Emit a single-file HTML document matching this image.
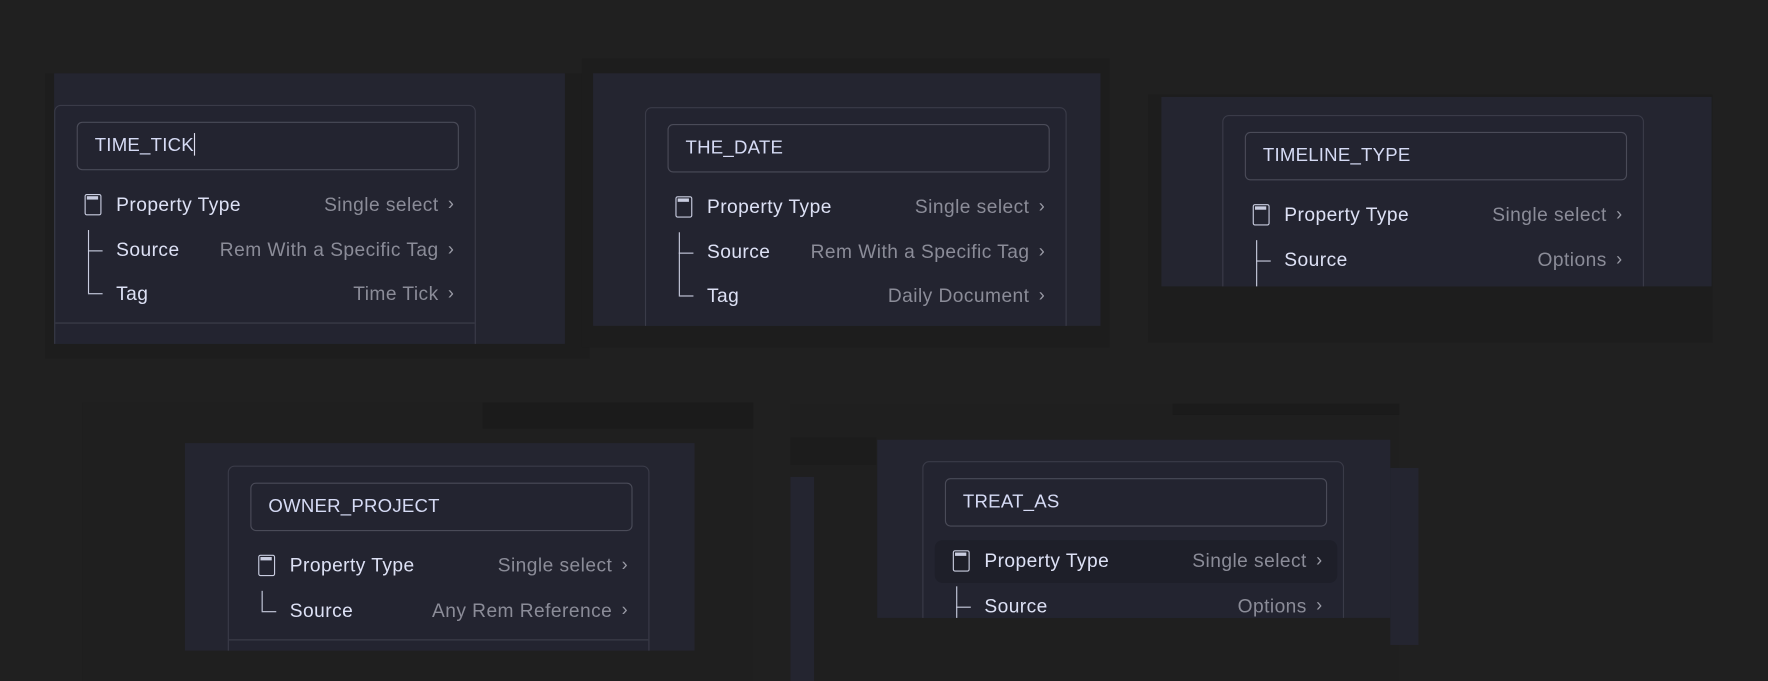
<!DOCTYPE html>
<html><head><style>
*{margin:0;padding:0;box-sizing:border-box}
html,body{width:1768px;height:681px;overflow:hidden;background:#202020}
#w{position:absolute;left:0;top:0;width:1568px;height:604px;overflow:hidden;transform:scale(1.12755);transform-origin:0 0;font-family:"Liberation Sans",Arial,sans-serif}
.a{position:absolute}
.o{position:absolute;background:#1d1d1d}
.bg{position:absolute;background:#242530;overflow:hidden}
.card{position:absolute;border:1px solid #3a3b48;border-radius:6px;background:#232430;width:374px;height:400px}
.inp{position:absolute;left:19px;top:14px;width:339px;height:43px;border:1px solid #4a4b58;border-radius:5px;color:#d6dbf5;font-size:16.5px;line-height:41px;padding-left:15px;letter-spacing:0.2px}
.row{position:absolute;left:0;width:374px;height:20px;font-size:17px;line-height:20px;letter-spacing:0.4px}
.lab{position:absolute;left:54px;color:#dde1f5}
.val{position:absolute;right:34px;color:#8b8c98}
.chev{position:absolute;right:20px;color:#9a9ba6;font-size:16px}
.ic{position:absolute;left:26px;top:0px;width:15px;height:19px;border:1.5px solid #c9cde0;border-radius:2px}
.ic:before{content:"";position:absolute;left:1px;top:1px;width:10px;height:3px;background:#c9cde0}
.vl{position:absolute;left:29px;width:1px;background:#c9cde0}
.hl{position:absolute;left:29px;width:13px;height:1px;background:#c9cde0}
.sep{position:absolute;left:0;width:372px;height:1px;background:#3e3f4c}
</style></head><body><div id="w">

<!-- panel 1 -->
<div class="o" style="left:40px;top:65px;width:483px;height:253px"></div>
<div class="bg" style="left:48px;top:65px;width:453px;height:240px">
 <div class="card" style="left:0;top:28px">
  <div class="inp">TIME_TICK<span style="display:inline-block;width:1px;height:20px;background:#dde;vertical-align:middle;margin-top:-3px"></span></div>
  <div class="row" style="top:78px"><div class="ic"></div><span class="lab">Property Type</span><span class="val">Single select</span><span class="chev">›</span></div>
  <div class="vl" style="top:110px;height:56px"></div>
  <div class="hl" style="top:128px"></div><div class="hl" style="top:166px"></div>
  <div class="row" style="top:118px"><span class="lab">Source</span><span class="val">Rem With a Specific Tag</span><span class="chev">›</span></div>
  <div class="row" style="top:157px"><span class="lab">Tag</span><span class="val">Time Tick</span><span class="chev">›</span></div>
  <div class="sep" style="top:192px"></div>
 </div>
</div>

<!-- panel 2 -->
<div class="o" style="left:516px;top:52px;width:468px;height:256px"></div>
<div class="bg" style="left:526px;top:65px;width:450px;height:224px">
 <div class="card" style="left:46px;top:30px">
  <div class="inp">THE_DATE</div>
  <div class="row" style="top:78px"><div class="ic"></div><span class="lab">Property Type</span><span class="val">Single select</span><span class="chev">›</span></div>
  <div class="vl" style="top:110px;height:56px"></div>
  <div class="hl" style="top:128px"></div><div class="hl" style="top:166px"></div>
  <div class="row" style="top:118px"><span class="lab">Source</span><span class="val">Rem With a Specific Tag</span><span class="chev">›</span></div>
  <div class="row" style="top:157px"><span class="lab">Tag</span><span class="val">Daily Document</span><span class="chev">›</span></div>
 </div>
</div>

<!-- panel 3 -->
<div class="o" style="left:1018px;top:84px;width:501px;height:220px"></div>
<div class="bg" style="left:1030px;top:86px;width:488px;height:168px">
 <div class="card" style="left:54px;top:16px">
  <div class="inp">TIMELINE_TYPE</div>
  <div class="row" style="top:78px"><div class="ic"></div><span class="lab">Property Type</span><span class="val">Single select</span><span class="chev">›</span></div>
  <div class="vl" style="top:110px;height:60px"></div>
  <div class="hl" style="top:128px"></div>
  <div class="row" style="top:118px"><span class="lab">Source</span><span class="val">Options</span><span class="chev">›</span></div>
 </div>
</div>

<!-- panel 4 -->
<div class="o" style="left:73px;top:357px;width:595px;height:247px;background:#1f1f1f"></div>
<div class="o" style="left:428px;top:357px;width:240px;height:23px;background:#1b1b1b"></div>
<div class="bg" style="left:164px;top:393px;width:452px;height:184px">
 <div class="card" style="left:38px;top:20px">
  <div class="inp">OWNER_PROJECT</div>
  <div class="row" style="top:78px"><div class="ic"></div><span class="lab">Property Type</span><span class="val">Single select</span><span class="chev">›</span></div>
  <div class="vl" style="top:110px;height:18px"></div>
  <div class="hl" style="top:128px"></div>
  <div class="row" style="top:118px"><span class="lab">Source</span><span class="val">Any Rem Reference</span><span class="chev">›</span></div>
  <div class="sep" style="top:153px"></div>
 </div>
</div>

<!-- panel 5 -->
<div class="o" style="left:701px;top:358px;width:540px;height:246px;background:#1f1f1f"></div>
<div class="o" style="left:1040px;top:358px;width:201px;height:10px;background:#1b1b1b"></div>
<div class="o" style="left:701px;top:388px;width:76px;height:24px;background:#1c1c1c"></div>
<div class="a" style="left:701px;top:423px;width:21px;height:181px;background:#242530"></div>
<div class="a" style="left:1233px;top:415px;width:25px;height:157px;background:#242530"></div>
<div class="bg" style="left:778px;top:390px;width:455px;height:158px">
 <div class="card" style="left:40px;top:19px">
  <div class="inp">TREAT_AS</div>
  <div class="a" style="left:10px;top:69px;width:357px;height:38px;background:#1e1f29;border-radius:7px"></div>
  <div class="row" style="top:78px"><div class="ic"></div><span class="lab">Property Type</span><span class="val">Single select</span><span class="chev">›</span></div>
  <div class="vl" style="top:110px;height:40px"></div>
  <div class="hl" style="top:128px"></div>
  <div class="row" style="top:118px"><span class="lab">Source</span><span class="val">Options</span><span class="chev">›</span></div>
 </div>
</div>

</div></body></html>
